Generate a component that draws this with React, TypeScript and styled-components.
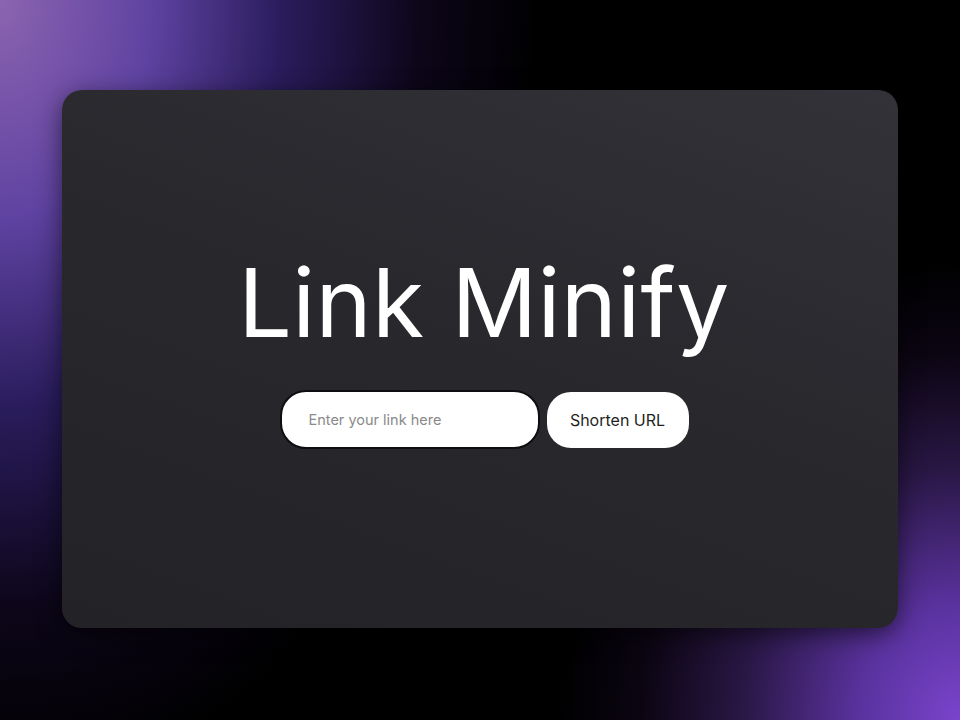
import React from "react";
import styled, { createGlobalStyle } from "styled-components";

const Global = createGlobalStyle`
  html, body { margin: 0; padding: 0; height: 100%; }
  body {
    background: #000;
    font-family: Inter, "Noto Sans", sans-serif;
  }
  #root { height: 100%; }
`;

const Page = styled.div`
  width: 960px;
  height: 720px;
  box-sizing: border-box;
  padding: 90px 62px 92px 62px;
  display: flex;
  background:
    radial-gradient(ellipse 540px 780px at 0% 0%, rgba(140, 100, 176, 1) 0%, rgba(100, 70, 170, 0.95) 28%, rgba(56, 38, 124, 0.75) 52%, rgba(25, 12, 50, 0.5) 78%, rgba(0, 0, 0, 0) 100%),
    radial-gradient(ellipse 400px 460px at 100% 100%, rgba(122, 68, 204, 1) 0%, rgba(100, 56, 176, 0.9) 25%, rgba(58, 32, 96, 0.7) 55%, rgba(22, 10, 36, 0.5) 80%, rgba(0, 0, 0, 0) 100%),
    #000;
`;

const Card = styled.main`
  flex: 1;
  border-radius: 20px;
  background: linear-gradient(200deg, #333238 0%, #29282d 45%, #232226 100%);
  box-shadow: 0 6px 24px rgba(0, 0, 0, 0.55);
  display: flex;
  flex-direction: column;
  align-items: center;
  justify-content: center;
  padding: 0 0 18px 8px;
`;

const Title = styled.h1`
  margin: 0 0 35px 0;
  color: #ffffff;
  font-family: Inter, "Noto Sans", sans-serif;
  font-weight: 400;
  font-size: 95px;
  line-height: 1.1;
  letter-spacing: 0.3px;
`;

const Form = styled.form`
  display: flex;
  align-items: center;
  gap: 7px;
`;

const Input = styled.input`
  width: 260px;
  height: 59px;
  box-sizing: border-box;
  border: 2px solid #0e0e10;
  border-radius: 26px;
  background: #fff;
  padding: 0 20px 0 27px;
  font-family: Inter, "Noto Sans", sans-serif;
  font-size: 14.5px;
  color: #222;
  outline: none;
  caret-color: #333;
  &::placeholder { color: #8a8a8a; }
`;

const Button = styled.button`
  width: 142px;
  height: 56px;
  border: none;
  border-radius: 24px;
  background: #fff;
  color: #1f1f22;
  font-family: Inter, "Noto Sans", sans-serif;
  font-size: 16px;
  font-weight: 400;
  cursor: pointer;
`;

export default function App() {
  return (
    <>
      <Global />
      <Page>
        <Card>
          <Title>Link Minify</Title>
          <Form onSubmit={(e) => e.preventDefault()}>
            <Input placeholder="Enter your link here" autoFocus />
            <Button type="submit">Shorten URL</Button>
          </Form>
        </Card>
      </Page>
    </>
  );
}
